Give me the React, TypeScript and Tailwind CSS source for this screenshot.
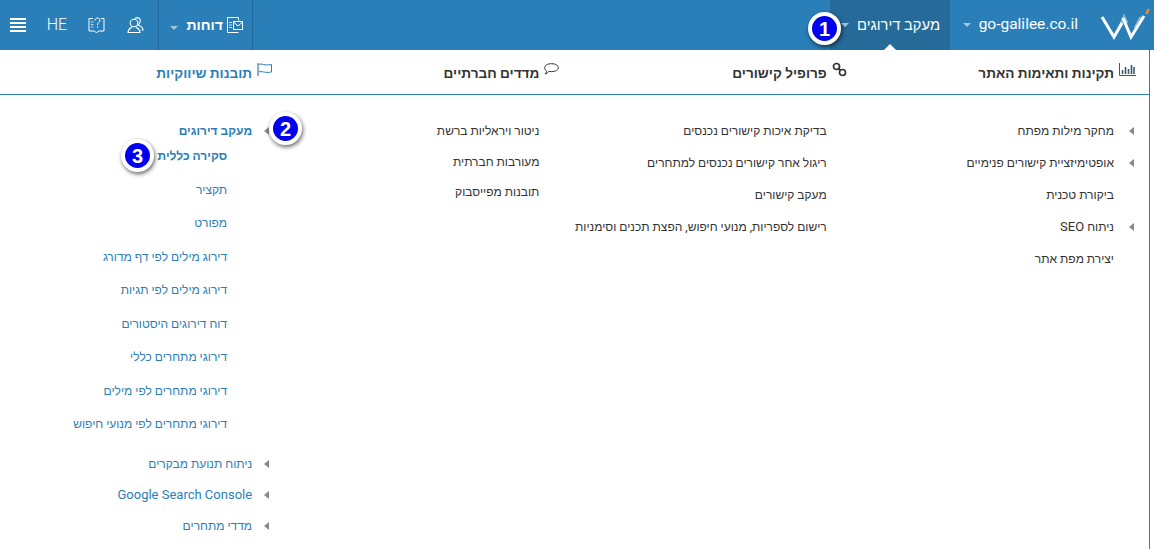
import React from "react";

const FONT = 'font-["Roboto","Liberation_Sans",sans-serif]';

const Caret = () => (
  <span className="inline-block w-0 h-0 border-x-[4px] border-x-transparent border-t-[4px] border-t-[#9fc6e0]" />
);

const SideArrow = () => (
  <span className="inline-block w-0 h-0 border-y-[4px] border-y-transparent border-r-[5px] border-r-[#888888]" />
);

const Badge = ({ n, className }: { n: number; className: string }) => (
  <div
    className={`absolute w-[33px] h-[33px] rounded-full bg-[#0000f0] border-[4px] border-white shadow-[1px_2px_4px_rgba(0,0,0,0.6)] flex items-center justify-center text-white font-bold text-[20px] font-["Liberation_Sans",sans-serif] ${className}`}
  >
    {n}
  </div>
);

const Logo = () => (
  <svg width="50" height="32" viewBox="0 0 50 32" fill="none">
    <path d="M20 19 L24 9 L27 15" stroke="#7fb6d8" strokeWidth="3" />
    <path d="M35 20 L41 9" stroke="#7fb6d8" strokeWidth="3" />
    <path d="M2 9 L14 29 L22 15" stroke="white" strokeWidth="3" />
    <path d="M23 10 L31 29 L44 8" stroke="white" strokeWidth="3" />
    <path d="M45 6 L47 1 H50 L48 6 Z" fill="#e08a3c" />
  </svg>
);

const ReportIcon = () => (
  <svg width="17" height="16" viewBox="0 0 17 16" fill="none" stroke="white" strokeWidth="1">
    <path d="M12.5 3.5 V0.5 H1.5 V15.5 H12.5" />
    <path d="M3 5.5 H6 M3 8 H6 M3 10.5 H6" stroke="#cfe3f0" />
    <rect x="7.5" y="4.5" width="9" height="8" fill="#2a7fb8" />
    <path d="M7.5 5 L12 9 L16.5 5" />
  </svg>
);

const HelpIcon = () => (
  <svg width="17" height="17" viewBox="0 0 17 17" fill="none" stroke="white" strokeWidth="1">
    <path d="M5 1.5 H1 V14 H6.5 L8.5 16 L10.5 14 H16 V1.5 H13" />
    <path d="M7 3.5 C7 0.2 12 0.2 12 3.2 C12 5.5 9.5 5.3 9.5 8" />
    <path d="M9.5 9.5 V11" />
    <path d="M3 5 H5.5 M3 7.5 H5.5 M3 10 H5.5" stroke="#cfe3f0" />
  </svg>
);

const UsersIcon = () => (
  <svg width="17" height="17" viewBox="0 0 17 17" fill="none" stroke="white" strokeWidth="1.1">
    <circle cx="7" cy="6" r="3.8" />
    <path d="M5 10 C4 11 1 11.5 1 15.5 H13 C13 11.5 10 11 9 10" />
    <path d="M8 1.5 C11 -0.5 14 1.5 13 5 C12.7 6.5 12 7.5 11 8 C13 9 16 9.5 16 13 H14.5" />
  </svg>
);

const ChartIcon = () => (
  <svg width="17" height="13" viewBox="0 0 17 13" fill="none" stroke="#1a5f8e">
    <path d="M0.5 0 V12.5 H17" />
    <path d="M3.5 7 V11" stroke="#555555" strokeWidth="1.6" />
    <path d="M6.5 4 V11" stroke="#1a5f8e" strokeWidth="1.6" />
    <path d="M9.5 6 V11" stroke="#555555" strokeWidth="1.6" />
    <path d="M12.5 2 V11" stroke="#1a5f8e" strokeWidth="1.6" />
    <path d="M15 4 V11" stroke="#555555" strokeWidth="1.6" />
  </svg>
);

const LinkIcon = () => (
  <svg width="15" height="15" viewBox="0 0 15 15" fill="none" stroke="#333333" strokeWidth="1.7">
    <circle cx="4.5" cy="4.5" r="3" />
    <circle cx="10.5" cy="10.5" r="3" />
    <path d="M6.5 6.5 L8.5 8.5" strokeWidth="2" />
  </svg>
);

const CommentIcon = () => (
  <svg width="15" height="12" viewBox="0 0 15 12" fill="none" stroke="#333333">
    <path d="M7.5 0.7 C11.5 0.7 14.3 2.3 14.3 4.7 C14.3 7 11.5 8.6 7.5 8.6 C6.5 8.6 5.5 8.5 4.8 8.3 C4 9.6 2.5 10.8 1 11 C2 10 2.6 8.8 2.4 7.7 C1.2 7 0.7 5.9 0.7 4.7 C0.7 2.3 3.5 0.7 7.5 0.7 Z" />
  </svg>
);

const FlagIcon = () => (
  <svg width="15" height="13" viewBox="0 0 15 13" fill="none" stroke="#2a7fb8">
    <path d="M1 0 V13" strokeWidth="1.2" />
    <path d="M1.5 1.5 C5 0 7 3 14.5 1.5 V9 C8 10.5 5 7.5 1.5 9" />
  </svg>
);

const TabHead = ({ icon, label, blue }: { icon: React.ReactNode; label: string; blue?: boolean }) => (
  <div className={`w-[287.3px] flex-none flex items-center text-[13.6px] font-bold ${blue ? "text-[#2a7fb8]" : "text-[#333333]"}`}>
    <span className="w-[28px] flex justify-end pl-[5px] pr-[1px] mb-[8px] flex-none">{icon}</span>
    <span className="whitespace-nowrap">{label}</span>
  </div>
);

const Item = ({ label, arrow }: { label: React.ReactNode; arrow?: boolean }) => (
  <div className="h-[32px] flex items-center text-[12px] text-[#333333]">
    <span className="w-[28px] flex justify-start pr-[8px] flex-none">{arrow && <SideArrow />}</span>
    <span className="whitespace-nowrap">{label}</span>
  </div>
);

const SocialItem = ({ label }: { label: string }) => (
  <div className="h-[30.5px] flex items-center text-[12px] text-[#333333] pr-[28px] first:h-[32px] first:-mb-[0.5px]">
    <span className="whitespace-nowrap">{label}</span>
  </div>
);

const BlueItem = ({ label, bold }: { label: string; bold?: boolean }) => (
  <div className="h-[33.5px] flex items-center text-[12px] text-[#2a7fb8] pr-[53px]">
    <span className={bold ? "font-bold" : ""}>{label}</span>
  </div>
);

const BlueGroup = ({ label }: { label: React.ReactNode }) => (
  <div className="h-[31px] flex items-center text-[12px] text-[#2a7fb8]">
    <span className="w-[28px] flex justify-start pr-[11px] flex-none">
      <SideArrow />
    </span>
    <span>{label}</span>
  </div>
);

export default function App() {
  return (
    <div dir="rtl" className={`relative w-[1154px] h-[549px] overflow-hidden bg-white ${FONT}`}>
      <header className="h-[50px] bg-[#2a7fb8] flex items-stretch text-white">
        <div className="w-[54px] flex items-start pt-[8px] pr-[4px] flex-none">
          <Logo />
        </div>
        <div className="w-[150px] flex items-center gap-[8px] text-[15.5px] pr-[22px] flex-none whitespace-nowrap">
          <span>go-galilee.co.il</span>
          <Caret />
        </div>
        <div className="w-[120px] bg-[#256a99] relative flex items-center gap-[8px] pr-[10px] text-[14.7px] flex-none whitespace-nowrap">
          <span>מעקב דירוגים</span>
          <Caret />
          <span className="absolute bottom-0 left-[54px] w-0 h-0 border-x-[6px] border-x-transparent border-b-[6px] border-b-white" />
        </div>
        <div className="flex-1" />
        <div className="w-[95px] border-x border-[#22699a] flex items-center gap-[3px] pr-[9px] text-[14px] font-bold">
          <ReportIcon />
          <span>דוחות</span>
          <span className="mr-[6px]"><Caret /></span>
        </div>
        <div className="w-[43px] flex items-center justify-center pr-[3px]"><UsersIcon /></div>
        <div className="w-[37px] flex items-center justify-center"><HelpIcon /></div>
        <div className="w-[44px] flex items-center justify-center pl-[2px] text-[16px] font-light font-['Roboto',sans-serif]">HE</div>
        <div className="w-[34px] flex flex-col items-center justify-center gap-[2px] pl-[2px]">
          <span className="w-[16px] h-[2px] bg-white" />
          <span className="w-[16px] h-[2px] bg-white" />
          <span className="w-[16px] h-[2px] bg-white" />
          <span className="w-[16px] h-[2px] bg-white" />
        </div>
      </header>

      <main className="mr-[4px] border-r border-[#2a7fb8] h-[499px]">
        <nav className="h-[45px] border-b border-[#2a7fb8] flex items-center pr-[7px] pt-[3px]">
          <TabHead icon={<ChartIcon />} label="תקינות ותאימות האתר" />
          <TabHead icon={<LinkIcon />} label="פרופיל קישורים" />
          <TabHead icon={<CommentIcon />} label="מדדים חברתיים" />
          <TabHead icon={<FlagIcon />} label="תובנות שיווקיות" blue />
        </nav>

        <div className="flex pr-[7px] pt-[20px]">
          <div className="w-[287.3px] flex-none">
            <Item label="מחקר מילות מפתח" arrow />
            <Item label="אופטימיזציית קישורים פנימיים" arrow />
            <Item label="ביקורת טכנית" />
            <Item label={<>ניתוח <span className="text-[13px]">SEO</span></>} arrow />
            <Item label="יצירת מפת אתר" />
          </div>
          <div className="w-[287.3px] flex-none">
            <Item label="בדיקת איכות קישורים נכנסים" />
            <Item label="ריגול אחר קישורים נכנסים למתחרים" />
            <Item label="מעקב קישורים" />
            <Item label="רישום לספריות, מנועי חיפוש, הפצת תכנים וסימניות" />
          </div>
          <div className="w-[287.3px] flex-none">
            <SocialItem label="ניטור ויראליות ברשת" />
            <SocialItem label="מעורבות חברתית" />
            <SocialItem label="תובנות מפייסבוק" />
          </div>
          <div className="w-[287.3px] flex-none">
            <div className="h-[32px] flex items-center text-[12px] font-bold text-[#2a7fb8]">
              <span className="w-[28px] flex justify-start pr-[11px] flex-none"><SideArrow /></span>
              <span>מעקב דירוגים</span>
            </div>
            <div className="-mt-[7.5px]">
              <BlueItem label="סקירה כללית" bold />
              <BlueItem label="תקציר" />
              <BlueItem label="מפורט" />
              <BlueItem label="דירוג מילים לפי דף מדורג" />
              <BlueItem label="דירוג מילים לפי תגיות" />
              <BlueItem label="דוח דירוגים היסטורים" />
              <BlueItem label="דירוגי מתחרים כללי" />
              <BlueItem label="דירוגי מתחרים לפי מילים" />
              <BlueItem label="דירוגי מתחרים לפי מנועי חיפוש" />
            </div>
            <div className="mt-[7px]">
              <BlueGroup label="ניתוח תנועת מבקרים" />
              <BlueGroup label={<span className="text-[13px]">Google Search Console</span>} />
              <BlueGroup label="מדדי מתחרים" />
            </div>
          </div>
        </div>
      </main>

      <Badge n={1} className="left-[808px] top-[12px]" />
      <Badge n={2} className="left-[269px] top-[112px]" />
      <Badge n={3} className="left-[121px] top-[139px]" />
    </div>
  );
}
